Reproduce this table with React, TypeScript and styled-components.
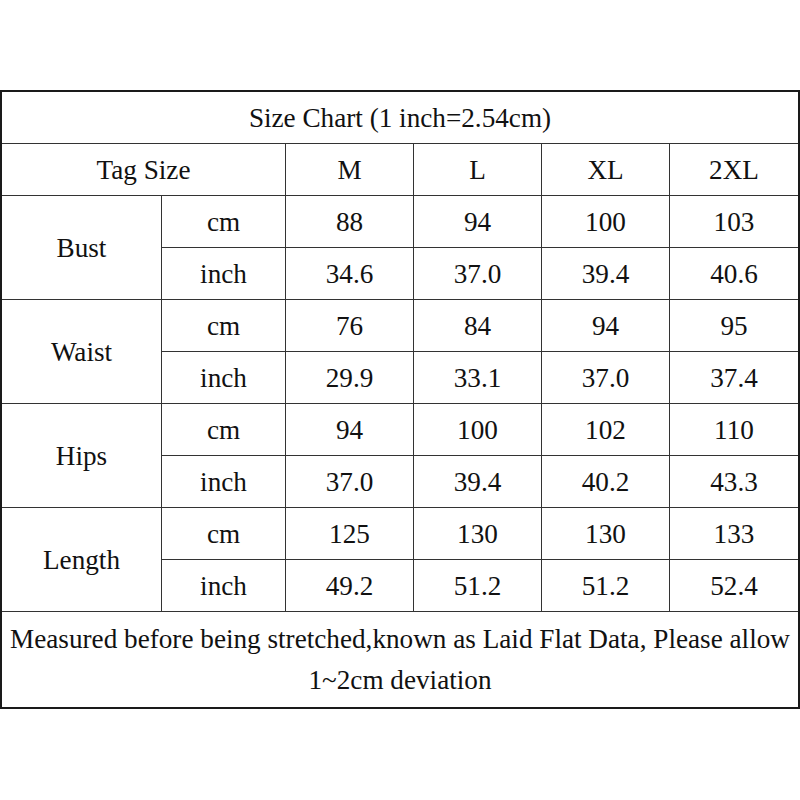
import React from "react";
import styled, { createGlobalStyle } from "styled-components";

const Global = createGlobalStyle`
  html, body { margin: 0; padding: 0; background: #fff; }
  body { font-family: "Liberation Serif", "Times New Roman", serif; color: #111; }
`;

const Page = styled.div`
  padding-top: 90px;
  width: 800px;
`;

const Chart = styled.div`
  display: grid;
  grid-template-columns: 159px 123px 127px 127px 127px 128px;
  grid-template-rows: repeat(10, 51px) 95px;
  gap: 1px;
  background: #333;
  border: 2px solid #1a1a1a;
  width: 796px;
  font-size: 27.2px;
`;

const Cell = styled.div<{ $col?: number; $row?: number }>`
  background: #fff;
  display: flex;
  align-items: center;
  justify-content: center;
  text-align: center;
  line-height: 1;
  padding-top: 2px;
  grid-column: span ${(p) => p.$col ?? 1};
  grid-row: span ${(p) => p.$row ?? 1};
`;

const Note = styled.div`
  grid-column: span 6;
  background: #fff;
  text-align: center;
  line-height: 41px;
  padding: 7px 0 0;
  white-space: normal;
`;

const sizes = ["M", "L", "XL", "2XL"];
const rows: { name: string; cm: string[]; inch: string[] }[] = [
  { name: "Bust", cm: ["88", "94", "100", "103"], inch: ["34.6", "37.0", "39.4", "40.6"] },
  { name: "Waist", cm: ["76", "84", "94", "95"], inch: ["29.9", "33.1", "37.0", "37.4"] },
  { name: "Hips", cm: ["94", "100", "102", "110"], inch: ["37.0", "39.4", "40.2", "43.3"] },
  { name: "Length", cm: ["125", "130", "130", "133"], inch: ["49.2", "51.2", "51.2", "52.4"] },
];

export default function App() {
  return (
    <>
      <Global />
      <Page>
        <Chart>
          <Cell $col={6}>Size Chart (1 inch=2.54cm)</Cell>
          <Cell $col={2}>Tag Size</Cell>
          {sizes.map((s) => (
            <Cell key={s}>{s}</Cell>
          ))}
          {rows.map((r) => (
            <React.Fragment key={r.name}>
              <Cell $row={2}>{r.name}</Cell>
              <Cell>cm</Cell>
              {r.cm.map((v, i) => (
                <Cell key={"c" + i}>{v}</Cell>
              ))}
              <Cell>inch</Cell>
              {r.inch.map((v, i) => (
                <Cell key={"i" + i}>{v}</Cell>
              ))}
            </React.Fragment>
          ))}
          <Note>
            Measured before being stretched,known as Laid Flat Data, Please allow 1~2cm deviation
          </Note>
        </Chart>
      </Page>
    </>
  );
}
